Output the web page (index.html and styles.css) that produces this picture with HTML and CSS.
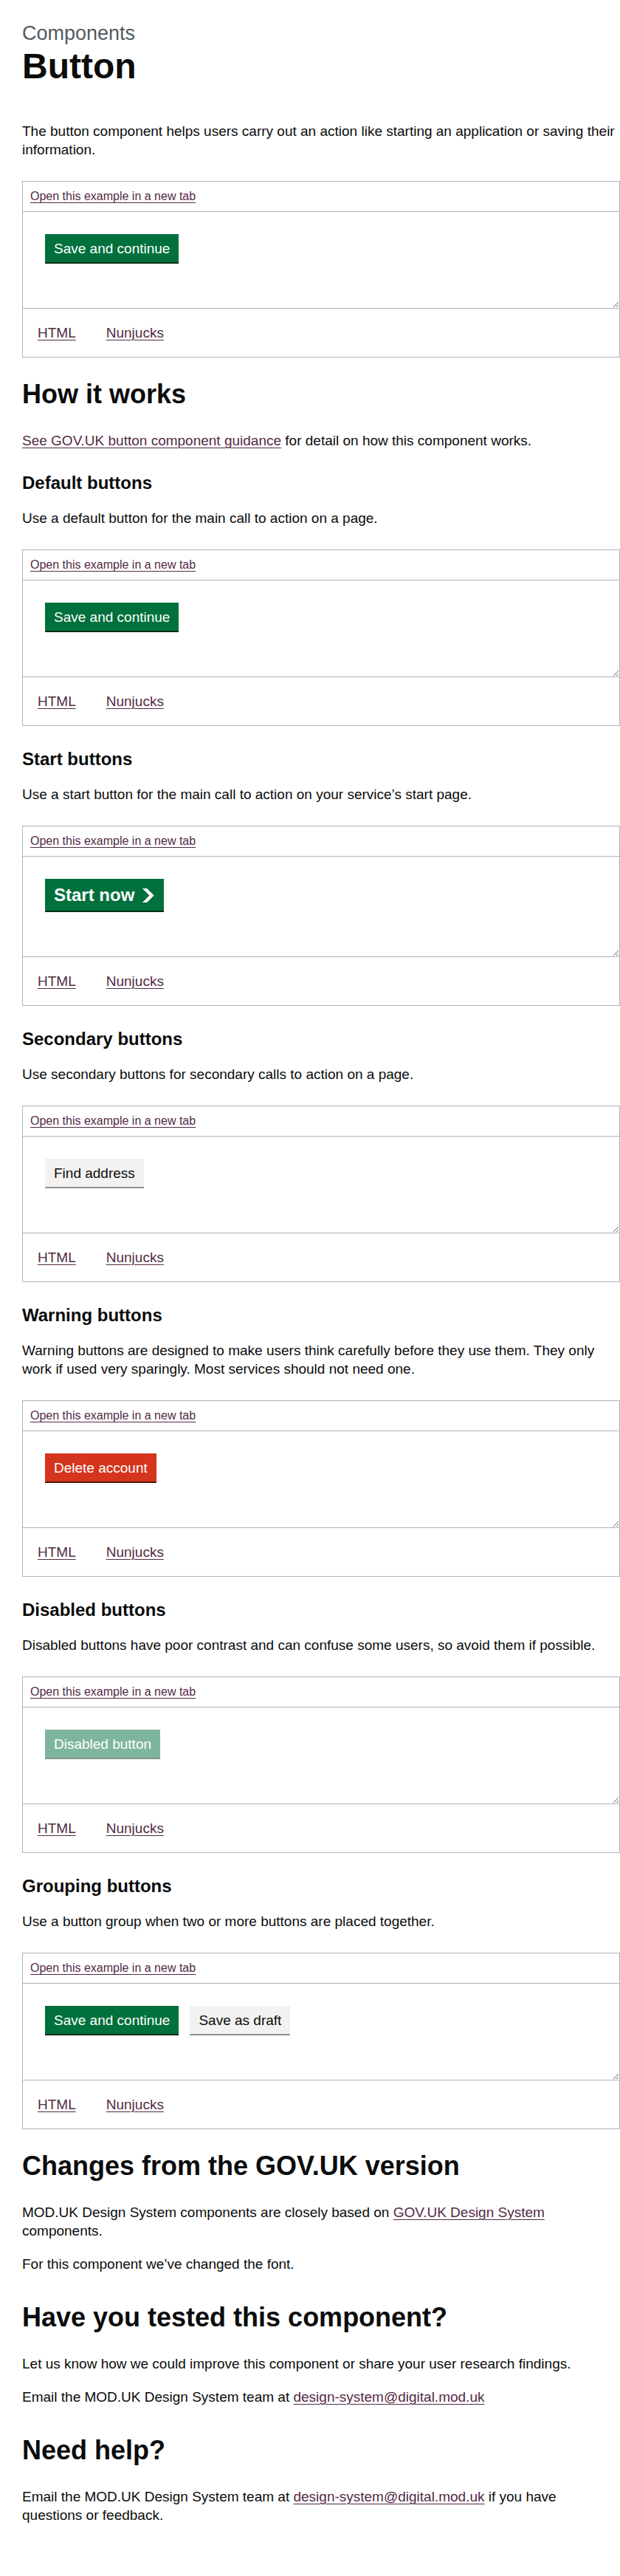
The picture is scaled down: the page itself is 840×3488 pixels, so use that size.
FILE: index.html
```html
<!DOCTYPE html>
<html lang="en">
<head>
<meta charset="utf-8">
<title>Button – MOD.UK Design System</title>
<link rel="stylesheet" href="styles.css">
</head>
<body>
<main class="page">
  <span class="caption">Components</span>
  <h1 class="heading-xl">Button</h1>
  <p class="body">The button component helps users carry out an action like starting an application or saving their information.</p>

  <div class="example">
    <div class="example__open"><a class="link" href="#">Open this example in a new tab</a></div>
    <div class="example__preview">
      <div class="button-group"><button class="btn" type="button">Save and continue</button></div>
    </div>
    <div class="example__tabs"><a class="link" href="#">HTML</a><a class="link" href="#">Nunjucks</a></div>
  </div>

  <h2 class="heading-l">How it works</h2>
  <p class="body"><a class="link" href="#">See GOV.UK button component guidance</a> for detail on how this component works.</p>

  <h3 class="heading-m">Default buttons</h3>
  <p class="body">Use a default button for the main call to action on a page.</p>
  <div class="example">
    <div class="example__open"><a class="link" href="#">Open this example in a new tab</a></div>
    <div class="example__preview">
      <div class="button-group"><button class="btn" type="button">Save and continue</button></div>
    </div>
    <div class="example__tabs"><a class="link" href="#">HTML</a><a class="link" href="#">Nunjucks</a></div>
  </div>

  <h3 class="heading-m">Start buttons</h3>
  <p class="body">Use a start button for the main call to action on your service’s start page.</p>
  <div class="example">
    <div class="example__open"><a class="link" href="#">Open this example in a new tab</a></div>
    <div class="example__preview">
      <div class="button-group">
        <a class="btn btn--start" href="#" role="button">Start now
          <svg class="btn__start-icon" xmlns="http://www.w3.org/2000/svg" width="17.5" height="19" viewBox="0 0 33 40" aria-hidden="true" focusable="false"><path fill="currentColor" d="M0 0h13l20 20-20 20H0l20-20z"/></svg>
        </a>
      </div>
    </div>
    <div class="example__tabs"><a class="link" href="#">HTML</a><a class="link" href="#">Nunjucks</a></div>
  </div>

  <h3 class="heading-m">Secondary buttons</h3>
  <p class="body">Use secondary buttons for secondary calls to action on a page.</p>
  <div class="example">
    <div class="example__open"><a class="link" href="#">Open this example in a new tab</a></div>
    <div class="example__preview">
      <div class="button-group"><button class="btn btn--secondary" type="button">Find address</button></div>
    </div>
    <div class="example__tabs"><a class="link" href="#">HTML</a><a class="link" href="#">Nunjucks</a></div>
  </div>

  <h3 class="heading-m">Warning buttons</h3>
  <p class="body">Warning buttons are designed to make users think carefully before they use them. They only work if used very sparingly. Most services should not need one.</p>
  <div class="example">
    <div class="example__open"><a class="link" href="#">Open this example in a new tab</a></div>
    <div class="example__preview">
      <div class="button-group"><button class="btn btn--warning" type="button">Delete account</button></div>
    </div>
    <div class="example__tabs"><a class="link" href="#">HTML</a><a class="link" href="#">Nunjucks</a></div>
  </div>

  <h3 class="heading-m">Disabled buttons</h3>
  <p class="body">Disabled buttons have poor contrast and can confuse some users, so avoid them if possible.</p>
  <div class="example">
    <div class="example__open"><a class="link" href="#">Open this example in a new tab</a></div>
    <div class="example__preview">
      <div class="button-group"><button class="btn btn--disabled" type="button" disabled>Disabled button</button></div>
    </div>
    <div class="example__tabs"><a class="link" href="#">HTML</a><a class="link" href="#">Nunjucks</a></div>
  </div>

  <h3 class="heading-m">Grouping buttons</h3>
  <p class="body">Use a button group when two or more buttons are placed together.</p>
  <div class="example">
    <div class="example__open"><a class="link" href="#">Open this example in a new tab</a></div>
    <div class="example__preview">
      <div class="button-group">
        <button class="btn" type="button">Save and continue</button>
        <button class="btn btn--secondary" type="button">Save as draft</button>
      </div>
    </div>
    <div class="example__tabs"><a class="link" href="#">HTML</a><a class="link" href="#">Nunjucks</a></div>
  </div>

  <h2 class="heading-l">Changes from the GOV.UK version</h2>
  <p class="body">MOD.UK Design System components are closely based on <a class="link" href="#">GOV.UK Design System</a> components.</p>
  <p class="body">For this component we’ve changed the font.</p>

  <h2 class="heading-l">Have you tested this component?</h2>
  <p class="body">Let us know how we could improve this component or share your user research findings.</p>
  <p class="body">Email the MOD.UK Design System team at <a class="link" href="#">design-system@digital.mod.uk</a></p>

  <h2 class="heading-l">Need help?</h2>
  <p class="body">Email the MOD.UK Design System team at <a class="link" href="#">design-system@digital.mod.uk</a> if you have questions or feedback.</p>
</main>
</body>
</html>
```

FILE: styles.css
```css
html {
  background: #ffffff;
}

body {
  margin: 0;
  font-family: "Liberation Sans", Arial, sans-serif;
  color: #0b0c0c;
  background: #ffffff;
}

.page {
  box-sizing: border-box;
  width: 810px;
  margin-left: 30px;
  padding: 30px 0 40px;
}

.caption {
  display: block;
  margin-bottom: 5px;
  font-size: 27px;
  line-height: 30px;
  font-weight: 400;
  color: #505a5f;
}

.heading-xl {
  margin: 0 0 50px;
  font-size: 48px;
  line-height: 50px;
  font-weight: 700;
}

.heading-l {
  margin: 0 0 30px;
  font-size: 36px;
  line-height: 40px;
  font-weight: 700;
}

.heading-m {
  margin: 0 0 20px;
  font-size: 24px;
  line-height: 30px;
  font-weight: 700;
}

.body {
  margin: 0 0 20px;
  font-size: 19px;
  line-height: 25px;
}

.body + .heading-l {
  padding-top: 20px;
}

.body + .heading-m {
  padding-top: 10px;
}

.link {
  color: #532a45;
  text-decoration: underline;
  text-decoration-thickness: 1px;
  text-underline-offset: 0.1578em;
}

/* Example block */
.example {
  margin: 30px 0;
  border: 1px solid #b1b4b6;
}

.example__open {
  padding: 10px;
  font-size: 16px;
  line-height: 20px;
  border-bottom: 1px solid #b1b4b6;
}

.example__preview {
  padding: 30px;
  border-bottom: 1px solid #b1b4b6;
  overflow: hidden;
  resize: vertical;
}

.example__tabs {
  display: flex;
  gap: 41px;
  padding: 20px;
  font-size: 19px;
  line-height: 25px;
}

/* Buttons */
.button-group {
  display: flex;
  align-items: flex-start;
  gap: 15px;
}

.btn {
  box-sizing: border-box;
  display: inline-block;
  margin: 0 0 32px;
  padding: 8px 10px 7px;
  border: 2px solid transparent;
  border-radius: 0;
  font-family: "Liberation Sans", Arial, sans-serif;
  font-size: 19px;
  line-height: 1;
  font-weight: 400;
  color: #ffffff;
  background-color: #00703c;
  box-shadow: 0 2px 0 #002d18;
  text-align: center;
  text-decoration: none;
  cursor: pointer;
}

.btn--start {
  display: inline-flex;
  align-items: center;
  font-size: 24px;
  font-weight: 700;
}

.btn__start-icon {
  flex-shrink: 0;
  margin-left: 10px;
}

.btn--secondary {
  color: #0b0c0c;
  background-color: #f3f2f1;
  box-shadow: 0 2px 0 #929191;
}

.btn--warning {
  background-color: #d4351c;
  box-shadow: 0 2px 0 #55150b;
}

.btn--disabled {
  opacity: 0.5;
  cursor: not-allowed;
}
```
